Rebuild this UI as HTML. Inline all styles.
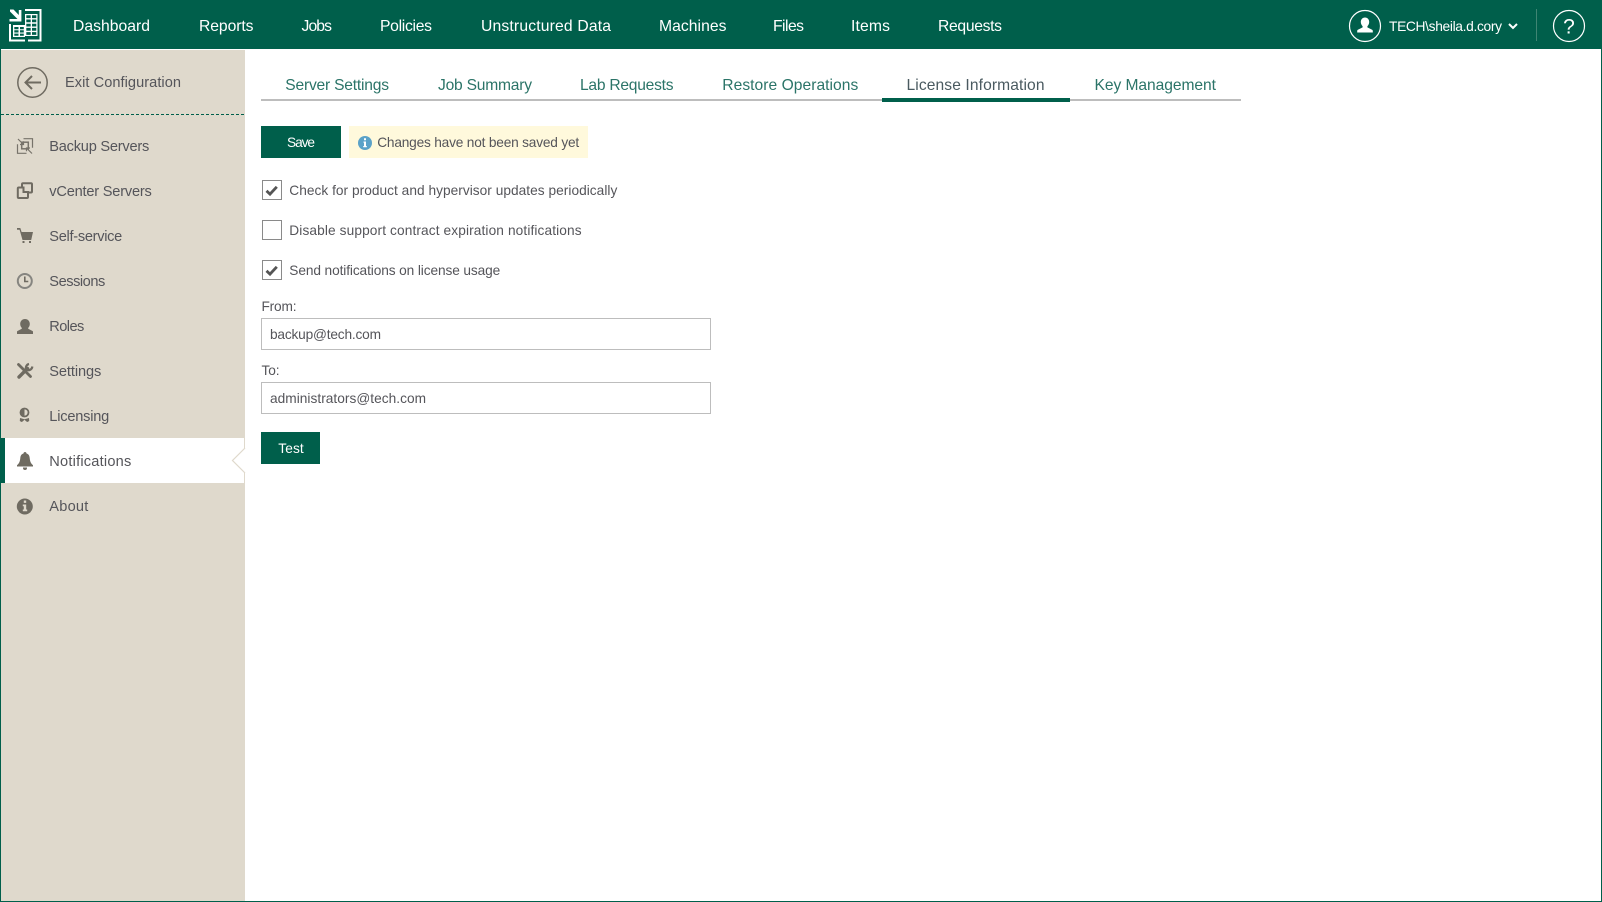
<!DOCTYPE html>
<html lang="en">
<head>
<meta charset="utf-8">
<title>Notifications</title>
<style>
html,body{margin:0;padding:0;background:#fff;width:1602px;height:902px;overflow:hidden}
svg{display:block}
text{font-family:"Liberation Sans",Arial,sans-serif}
.n{font-size:15.700px;fill:#fff}
.s{font-size:14.600px;fill:#55555a}
.t{font-size:15.600px;fill:#2b7468}
.c{font-size:13.700px;fill:#55555a}
.b{font-size:13.700px;fill:#fff}
.i{fill:#6f6b61}
</style>
</head>
<body>
<svg width="1602" height="902" viewBox="0 0 1602 902" xmlns="http://www.w3.org/2000/svg">
<rect width="1602" height="902" fill="#fff"/>
<!-- page border -->
<rect x="0" y="0" width="1" height="902" fill="#005f4b"/>
<rect x="1601" y="0" width="1" height="902" fill="#005f4b"/>
<rect x="0" y="901" width="1602" height="1" fill="#005f4b"/>
<!-- header -->
<rect x="0" y="0" width="1602" height="49" fill="#005f4b"/>
<!-- logo -->
<g fill="#fff">
<path d="M10 9.500h3.500L18.800 15V10h2.600v11.500H9.500v-2.500h8L10 11.500z"/>
<rect x="9" y="24" width="2" height="17.500"/>
<rect x="9" y="39.500" width="16" height="2"/>
<rect x="25" y="9" width="16.500" height="2"/>
<rect x="39.500" y="9" width="2" height="32.500"/>
<rect x="28" y="39.500" width="13" height="2"/>
<path fill-rule="evenodd" d="M13 25h12v12H13zM14.300 27v2.200h4.200V27zM20 27v2.200h3.800V27zM14.300 30.300v2.200h4.200v-2.200zM20 30.300v2.200h3.800v-2.200zM14.300 33.600v2.200h4.200v-2.200zM20 33.600v2.200h3.800v-2.200z"/>
<path fill-rule="evenodd" d="M25 14h12.500v22H25zM26.300 15.300v2.800h4.400v-2.800zM32 15.300v2.800h4.300v-2.800zM26.300 19.500v2.800h4.400v-2.800zM32 19.500v2.800h4.300v-2.800zM26.300 23.700v2.800h4.400v-2.800zM32 23.700v2.800h4.300v-2.800zM26.300 27.900v2.800h4.400v-2.800zM32 27.900v2.800h4.300v-2.800zM26.300 32.100v2.800h4.400v-2.800zM32 32.100v2.800h4.300v-2.800z"/>
</g>
<!-- nav -->
<text class="n" x="73" y="31" textLength="77">Dashboard</text>
<text class="n" x="199" y="31" textLength="54.500">Reports</text>
<text class="n" x="301.500" y="31" textLength="30.500">Jobs</text>
<text class="n" x="380" y="31" textLength="52">Policies</text>
<text class="n" x="481" y="31" textLength="130">Unstructured Data</text>
<text class="n" x="659" y="31" textLength="67.500">Machines</text>
<text class="n" x="773" y="31" textLength="31">Files</text>
<text class="n" x="851" y="31" textLength="39">Items</text>
<text class="n" x="938" y="31" textLength="64">Requests</text>
<!-- user -->
<circle cx="1365" cy="26" r="15.500" fill="none" stroke="#fff" stroke-width="1.200"/>
<path fill="#fff" d="M1365 17.500c2.600 0 4.200 2 4.200 4.500 0 1.800-.8 3.300-1.800 4.200v1.200l4.700 2.300c.5.300.7.700.7 1.300v1.500h-15.600V31c0-.6.200-1 .7-1.300l4.700-2.300v-1.200c-1-.9-1.800-2.400-1.800-4.200 0-2.500 1.600-4.500 4.200-4.500z"/>
<text x="1389" y="31" textLength="113" style="font-size:13.800px;fill:#fff">TECH\sheila.d.cory</text>
<path d="M1509 24l4 4 4-4" fill="none" stroke="#fff" stroke-width="2"/>
<rect x="1536" y="9" width="1" height="32" fill="#3f8573"/>
<circle cx="1569" cy="26" r="15.500" fill="none" stroke="#fff" stroke-width="1.200"/>
<text x="1569" y="33.500" text-anchor="middle" style="font-size:21px;fill:#fff">?</text>
<!-- sidebar -->
<rect x="1" y="50" width="244" height="851" fill="#dfd9cc"/>
<line x1="1" y1="114.500" x2="245" y2="114.500" stroke="#005f4b" stroke-width="1" stroke-dasharray="3 2"/>
<circle cx="32.500" cy="82.500" r="14.700" fill="none" stroke="#6f6b61" stroke-width="1.500"/>
<path d="M41 82.500H26M32 76l-6.500 6.500L32 89" fill="none" stroke="#6f6b61" stroke-width="2"/>
<text class="s" x="65" y="87" textLength="116">Exit Configuration</text>
<!-- active -->
<rect x="0" y="438" width="5" height="45" fill="#005f4b"/>
<rect x="5" y="438" width="239" height="45" fill="#fff"/>
<path d="M245 448L232.500 460.500L245 473" fill="#fff" stroke="#dfd9cc" stroke-width="1.200"/>
<path d="M244 438h1v10h-1zM244 473h1v10h-1z" fill="#dfd9cc"/>
<!-- sidebar items -->
<text class="s" x="49.300" y="151" textLength="100">Backup Servers</text>
<text class="s" x="49.300" y="196" textLength="102.500">vCenter Servers</text>
<text class="s" x="49.300" y="241" textLength="73">Self-service</text>
<text class="s" x="49.300" y="286" textLength="56">Sessions</text>
<text class="s" x="49.300" y="331" textLength="35">Roles</text>
<text class="s" x="49.300" y="376" textLength="52">Settings</text>
<text class="s" x="49.300" y="421" textLength="60">Licensing</text>
<text class="s" x="49.300" y="466" textLength="82">Notifications</text>
<text class="s" x="49.300" y="511" textLength="39">About</text>
<!-- icons -->
<g fill="none" stroke="#77736a" stroke-width="1.200">
<path d="M23.500 138.700h9v9M26.500 153.300h-9v-9"/>
<path d="M18 139l5 5M23.500 141.300v3.200H20M32 153.500l-5-5M26.500 151.300V148H30"/>
<rect x="21.700" y="142.200" width="6.600" height="6.600" stroke-width="1.500"/>
</g>
<path fill="none" stroke="#6f6b61" stroke-width="2" d="M17.800 188.500a1 1 0 0 1 1-1h4.700v4.500h4.500v5a1 1 0 0 1-1 1h-8.200a1 1 0 0 1-1-1zM22 187v-2.800a1 1 0 0 1 1-1h8a1 1 0 0 1 1 1v7.300a1 1 0 0 1-1 1h-3"/>
<path class="i" d="M17 228h3.300l1.300 4H33l-1.800 8H22.500l-2.900-10.300H17zM22.500 241h2v2h-2zM29 241h2v2h-2z"/>
<circle cx="24.800" cy="281" r="7" fill="none" stroke="#868580" stroke-width="2"/>
<path d="M24.800 276.500v5h3.500" fill="none" stroke="#6f6b61" stroke-width="1.600"/>
<path class="i" d="M25 319c3 0 4.800 2.300 4.800 5 0 1.600-.7 3-1.600 3.900v.8l4.300 2.300c.4.200.5.600.5 1V334H17v-2c0-.4.100-.8.500-1l4.300-2.300v-.8c-.9-.9-1.600-2.300-1.600-3.900 0-2.700 1.800-5 4.800-5z"/>
<g fill="none" stroke="#6f6b61">
<path d="M18.500 364.500l12 12" stroke-width="2.800" stroke-linecap="round"/>
<path d="M19 377l8.500-8.500" stroke-width="3.400" stroke-linecap="round"/>
<path d="M32.300 366.500a4 4 0 0 1-6 3.200M26.200 369.500a4 4 0 0 1 2.800-5.500" stroke-width="2.200"/>
</g>
<circle cx="24.500" cy="412.500" r="4" fill="none" stroke="#6f6b61" stroke-width="1.800"/>
<path class="i" d="M24.500 408.500a4 4 0 0 0 0 8zM20 418l4.500 1.200L29 418l.2 3-1.800 1-1-.5-1.900-1.700-1.900 1.700-1 .5-1.800-1z"/>
<path class="i" d="M23.500 453.500c0-.8.600-1.500 1.500-1.500s1.500.7 1.500 1.500c2 .6 3 2 3.200 4.500.3 3.300 1 5.300 3.300 7.300v1.200H17v-1.200c2.300-2 3-4 3.300-7.300.2-2.500 1.200-3.900 3.200-4.500zM23 467.500h4v.5a2 2 0 0 1-4 0z"/>
<circle class="i" cx="24.800" cy="506.500" r="8"/>
<path fill="#dfd9cc" d="M23.800 500.500h2.400v2.400h-2.400zM22.800 504.500h3.400v5h1v1.800h-4.400v-1.800h1v-3.200h-1z"/>
<!-- tabs -->
<rect x="261" y="99" width="980" height="2" fill="#bdbdbd"/>
<rect x="882" y="98" width="188" height="4" fill="#005f4b"/>
<text class="t" x="285.300" y="90" textLength="103.700">Server Settings</text>
<text class="t" x="438" y="90" textLength="94">Job Summary</text>
<text class="t" x="580" y="90" textLength="93.500">Lab Requests</text>
<text class="t" x="722.300" y="90" textLength="136">Restore Operations</text>
<text class="t" x="906.500" y="90" textLength="138" style="fill:#4a5a60">License Information</text>
<text class="t" x="1094.500" y="90" textLength="121.500">Key Management</text>
<!-- save -->
<rect x="261" y="126" width="80" height="32" fill="#005f4b"/>
<text class="b" x="287" y="147" textLength="28">Save</text>
<rect x="349" y="126" width="239" height="32" fill="#fff9dc"/>
<circle cx="365" cy="143" r="7" fill="#5ba2c8"/>
<path fill="#fff" d="M364 138.300h2v2h-2zM363.500 141.500h2.500v4.500h.8v1.300h-3.600V146h.8v-3.200h-.5z"/>
<text class="c" x="377.200" y="147" textLength="202">Changes have not been saved yet</text>
<!-- checkboxes -->
<rect x="262.500" y="180.500" width="19" height="19" fill="#fff" stroke="#8a8a8a"/>
<path d="M266.500 190.800l3.500 3.300 6.800-7.300" fill="none" stroke="#555" stroke-width="2.800"/>
<text class="c" x="289.300" y="195" textLength="328">Check for product and hypervisor updates periodically</text>
<rect x="262.500" y="220.500" width="19" height="19" fill="#fff" stroke="#8a8a8a"/>
<text class="c" x="289.300" y="235" textLength="292.300">Disable support contract expiration notifications</text>
<rect x="262.500" y="260.500" width="19" height="19" fill="#fff" stroke="#8a8a8a"/>
<path d="M266.500 270.800l3.500 3.300 6.800-7.300" fill="none" stroke="#555" stroke-width="2.800"/>
<text class="c" x="289.300" y="275" textLength="211">Send notifications on license usage</text>
<!-- form -->
<text class="c" x="261.500" y="311" textLength="35">From:</text>
<rect x="261.500" y="318.500" width="449" height="31" fill="#fff" stroke="#bdbdbd"/>
<text class="c" x="270" y="339" textLength="111">backup@tech.com</text>
<text class="c" x="261.500" y="375" textLength="18">To:</text>
<rect x="261.500" y="382.500" width="449" height="31" fill="#fff" stroke="#bdbdbd"/>
<text class="c" x="270" y="403" textLength="156">administrators@tech.com</text>
<rect x="261" y="432" width="59" height="32" fill="#005f4b"/>
<text class="b" x="278.300" y="453" textLength="25.400">Test</text>
</svg>
</body>
</html>
